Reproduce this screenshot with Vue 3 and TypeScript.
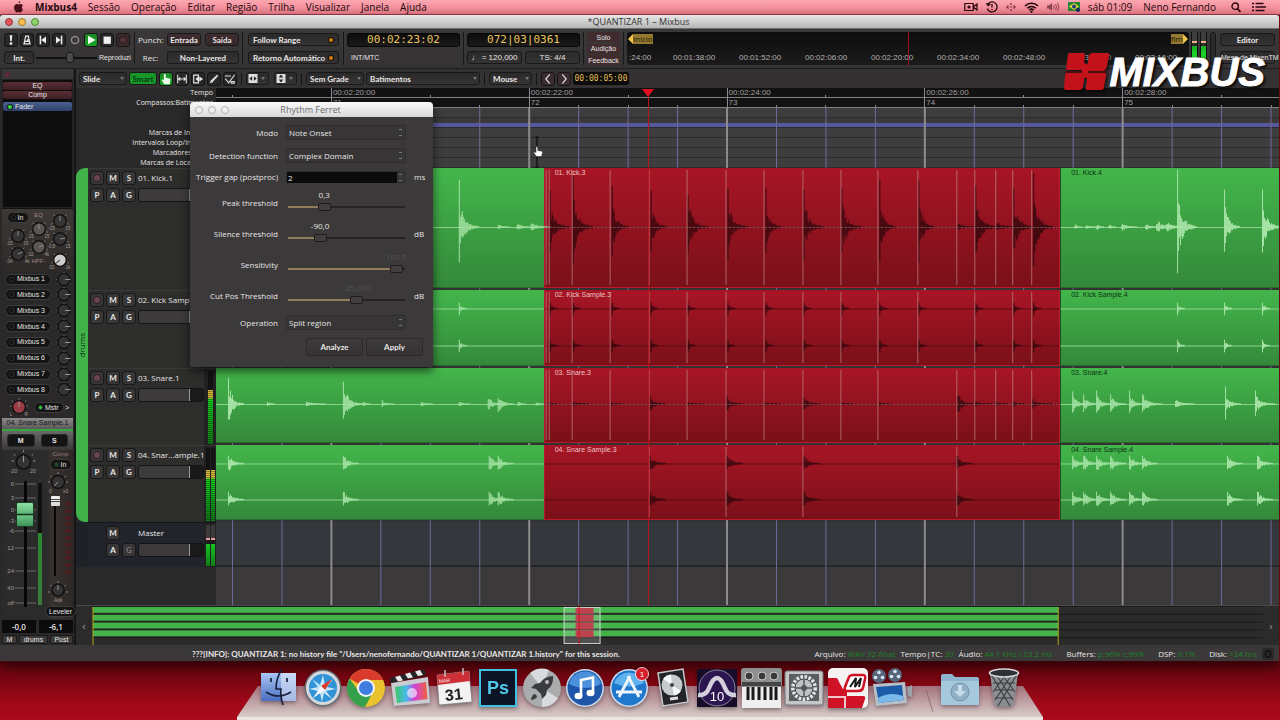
<script setup lang="ts">
import { ref } from 'vue'

type Burst = [x: number, up: number, down: number, body: number, tau: number]
interface Region { name: string; span: number; kind: 'green' | 'red' }
interface Track {
  name: string
  height: number
  stereo: boolean
  fader: number
  level: number
  centers: number[]
  regions: Region[]
  light: string
  dark: string
  splits: number[]
}

const ORIGIN = 216
const SPAN = 1064
const pct = (x: number): string => ((x - ORIGIN) / SPAN) * 100 + '%'

function makeRandom(seed: number): () => number {
  let s = seed
  return () => {
    s = (s * 16807) % 2147483647
    return s / 2147483647
  }
}

function wave(bursts: Burst[], centers: number[], seed: number): string {
  let d = ''
  centers.forEach((cy, c) => {
    const rnd = makeRandom(seed + c * 31)
    for (const [x, up, down, body, tau] of bursts) {
      const x0 = x - ORIGIN + 0.5
      d += `M${x0} ${(cy - up).toFixed(1)}V${(cy + down).toFixed(1)}`
      for (let i = 1; i < tau * 4; i++) {
        const env = body * Math.exp(-i / tau)
        const u = env * (0.45 + 0.75 * rnd()) + 0.5
        const l = env * (0.45 + 0.7 * rnd()) + 0.5
        d += `M${x0 + i} ${(cy - u).toFixed(1)}V${(cy + l).toFixed(1)}`
      }
    }
  })
  return d
}

const SPLITS = [546, 549, 572, 610, 649, 687, 726, 764, 803, 841, 878, 918, 957, 975, 996, 1013, 1032]

const kickLight: Burst[] = [
  [459, 48, 36, 26, 5], [498, 2, 2, 2, 3], [517, 2, 2, 3, 4], [531, 3, 3, 4, 5],
  [1075, 1, 1, 3, 2], [1086, 1, 1, 2, 3], [1097, 1, 2, 4, 2], [1109, 1, 1, 3, 2], [1122, 2, 2, 4, 4],
  [1146, 2, 2, 4, 3], [1157, 3, 3, 6, 6], [1167, 3, 3, 5, 5], [1178, 58, 47, 30, 5],
  [1225, 38, 25, 22, 4], [1263, 38, 26, 20, 5],
]
const kickDark: Burst[] = [
  [550, 37, 26, 20, 5], [573, 52, 38, 28, 5], [612, 42, 30, 24, 4], [651, 37, 25, 22, 4],
  [688, 33, 27, 22, 5], [728, 39, 34, 22, 5], [766, 40, 27, 22, 4], [804, 38, 34, 24, 5],
  [842, 40, 26, 22, 5], [880, 48, 35, 26, 4], [919, 47, 36, 28, 4], [958, 2, 2, 3, 5],
  [976, 42, 27, 28, 5], [997, 3, 3, 4, 6], [1014, 40, 22, 24, 5], [1034, 55, 40, 30, 5],
]
const sampleXs = [550, 573, 612, 651, 688, 728, 766, 804, 842, 880, 919, 976, 1014, 1034]
const sampleBurst = (x: number): Burst => [x, 6, 7, 5, 2]
const snareLight: Burst[] = [
  [228, 27, 16, 20, 4], [267, 2, 2, 2, 2], [306, 2, 2, 2, 5], [343, 23, 15, 17, 5], [363, 2, 2, 2, 2],
  [382, 4, 3, 2, 3], [421, 2, 2, 2, 3], [459, 2, 2, 2, 3], [488, 5, 5, 7, 4], [498, 6, 8, 8, 4], [518, 2, 2, 2, 2],
  [536, 1, 1, 2, 2], [1073, 13, 9, 9, 4], [1084, 10, 8, 8, 4], [1097, 14, 9, 9, 4], [1111, 10, 8, 8, 4],
  [1130, 14, 9, 9, 4], [1143, 10, 8, 9, 5], [1176, 3, 3, 4, 5], [1226, 18, 16, 9, 4], [1256, 14, 12, 8, 5],
]
const snareDark: Burst[] = [
  [550, 2, 2, 1, 2], [573, 2, 2, 2, 4], [611, 2, 2, 2, 3], [650, 9, 6, 8, 4], [688, 2, 2, 1, 4],
  [727, 8, 6, 7, 4], [765, 2, 2, 1, 4], [804, 7, 6, 7, 4], [842, 2, 2, 1, 3], [880, 2, 2, 1, 3],
  [958, 8, 8, 11, 4], [976, 3, 3, 2, 4], [996, 3, 3, 2, 3], [1014, 3, 3, 2, 3], [1033, 5, 5, 3, 5],
]
const snSampleBurst = (x: number): Burst => [x, 8, 6, 8, 4]

function regions(base: string): Region[] {
  return [
    { name: '', span: 328, kind: 'green' },
    { name: base + '.3', span: 517, kind: 'red' },
    { name: base + '.4', span: 219, kind: 'green' },
  ]
}

const tracks: Track[] = [
  { name: '01. Kick.1', height: 122, stereo: false, fader: 80, level: 0, centers: [60], regions: regions('01. Kick'),
    light: wave(kickLight, [60], 11), dark: wave(kickDark, [60], 5), splits: SPLITS },
  { name: '02. Kick Sample.1', height: 78, stereo: true, fader: 80, level: 0, centers: [19, 57], regions: regions('02. Kick Sample'),
    light: wave([459, 1178, 1225, 1263].map(sampleBurst), [19, 57], 3), dark: wave(sampleXs.map(sampleBurst), [19, 57], 9),
    splits: SPLITS.filter((x) => x !== 957 && x !== 996) },
  { name: '03. Snare.1', height: 77, stereo: false, fader: 80, level: 74, centers: [37], regions: regions('03. Snare'),
    light: wave(snareLight, [37], 21), dark: wave(snareDark, [37], 8), splits: SPLITS.filter((x) => x !== 918) },
  { name: '04. Snar…ample.1', height: 77, stereo: true, fader: 80, level: 70, centers: [19, 56], regions: regions('04. Snare Sample'),
    light: wave([228, 343, 489, 498, 1073, 1084, 1097, 1111, 1130, 1143, 1228, 1258].map(snSampleBurst), [19, 56], 15),
    dark: wave([650, 727, 804, 957].map(snSampleBurst), [19, 56], 4), splits: [649, 726, 803, 957] },
]

const grid = Array.from({ length: 22 }, (_, k) => ({ x: 232 + k * 49.5, bar: k % 4 === 2, half: k % 2 === 0 }))
const times = [
  { x: 331, t: '00:02:20:00', b: '71' }, { x: 529, t: '00:02:22:00', b: '72' }, { x: 727, t: '00:02:24:00', b: '73' },
  { x: 925, t: '00:02:26:00', b: '74' }, { x: 1123, t: '00:02:28:00', b: '75' },
]
const rulerNames = ['Tempo', 'Compassos:Batimentos', '', '', 'Marcas de Intervalo', 'Intervalos Loop/Inserção', 'Marcadores de CD', 'Marcas de Localização']
const menus = ['Sessão', 'Operação', 'Editar', 'Região', 'Trilha', 'Visualizar', 'Janela', 'Ajuda']
const miniTimes = [':24:00', '00:01:38:00', '00:01:52:00', '00:02:06:00', '00:02:20:00', '00:02:34:00', '00:02:48:00', '00:03:02:00', '00:03:16:00']
const sends = Array.from({ length: 8 }, (_, i) => 'Mixbus ' + (i + 1))
const scale = [
  { y: 4, t: '6' }, { y: 18, t: '3' }, { y: 30, t: '0' }, { y: 41, t: '-3' }, { y: 51, t: '-6' },
  { y: 68, t: '12' }, { y: 91, t: '24' }, { y: 108, t: '40' }, { y: 123, t: 'off' },
]
const sliders = [
  { label: 'Peak threshold', value: '0,3', v: 29, unit: '', off: false },
  { label: 'Silence threshold', value: '-90,0', v: 25, unit: 'dB', off: false },
  { label: 'Sensitivity', value: '100,0', v: 98, unit: '', off: true },
  { label: 'Cut Pos Threshold', value: '-35,000', v: 60, unit: 'dB', off: true },
]
const status = [
  ['Arquivo:', 'WAV 32-float'], ['Tempo|TC:', '30'], ['Áudio:', '44,1 kHz / 23,2 ms'],
  ['Buffers:', 'p:96% c:99%'], ['DSP:', '9,1%'], ['Disk:', '>24 hrs'],
]
const gap = ref('2')
</script>

<template>
  <div class="desktop">
    <header class="menubar">
      <svg class="apple" viewBox="0 0 12 14"><path d="M8.2 0C8.3 1.400 7.300 2.700 6 2.700 5.900 1.400 7 .2 8.200 0zM10 7.300c0-1.300.9-2 1.100-2.100C10.400 4.100 9.300 3.600 8.300 3.600c-.9 0-1.600.5-2.100.5S4.900 3.600 4.200 3.600C2.500 3.600.8 5 .8 7.600.8 10.300 2.800 13.400 4.100 13.400c.7 0 1.200-.5 2-.5s1.200.5 2 .5c1.300 0 2.500-2.100 3-3.300C10.600 9.700 10 8.700 10 7.300z" fill="#4a1018" /></svg>
      <a href="#" class="appname">Mixbus4</a>
      <a v-for="m in menus" :key="m" href="#">{{ m }}</a>
      <div class="tray">
        <svg width="14" height="10" viewBox="0 0 14 10"><path d="M.8 1.500h8.400v7H.8zM9.200 5l3.800-3v6z" fill="none" stroke="#2b0a10" stroke-width="1.200" /><circle cx="5" cy="5" r="1.600" fill="#2b0a10" /></svg>
        <svg width="12" height="12" viewBox="0 0 12 12"><path d="M2 3a5 5 0 1 1-.7 4.500M.5 2l1.500 2.500L4.500 3M6 3v3.500M6 8v1" fill="none" stroke="#2b0a10" stroke-width="1.300" /></svg>
        <svg width="10" height="10" viewBox="0 0 10 10"><path d="M5 1v2M5 7v2M4 5h2M2.500 3.500L1 5l1.500 1.500M7.500 3.500L9 5 7.500 6.500" fill="none" stroke="#7a2a38" stroke-width="1.200" /></svg>
        <svg width="15" height="11" viewBox="0 0 15 11"><path d="M1 4a9.200 9.200 0 0 1 13 0M3.200 6.200a6 6 0 0 1 8.600 0M5.300 8.200a3.200 3.200 0 0 1 4.400 0" fill="none" stroke="#1d060a" stroke-width="1.500" /><circle cx="7.500" cy="9.800" r="1.100" fill="#1d060a" /></svg>
        <svg width="13" height="10" viewBox="0 0 13 10"><path d="M0 3.500h2L5 1v8L2 6.500H0z" fill="#8c4450" /><path d="M6.500 3.200q1.200 1.800 0 3.600M8.500 2q2 3 0 6M10.500 1q3 4 0 8" fill="none" stroke="#8c4450" /></svg>
        <svg width="12" height="10" viewBox="0 0 12 10"><rect width="12" height="9" fill="#238a35" /><path d="M6 1l5 3.500L6 8 1 4.500z" fill="#e8d53a" /><circle cx="6" cy="4.500" r="2" fill="#1b3b8c" /><circle cx="10" cy="8" r="2" fill="#1b2b6c" /></svg>
        <span class="clock">sáb 01:09</span>
        <span class="user">Neno Fernando</span>
        <svg width="10" height="11" viewBox="0 0 10 11"><circle cx="4.200" cy="4.200" r="3.200" fill="none" stroke="#2b0a10" stroke-width="1.400" /><path d="M6.500 6.800L9.500 10" stroke="#2b0a10" stroke-width="1.700" /></svg>
        <svg width="14" height="10" viewBox="0 0 14 10"><path d="M0 1.500h2M3.500 1.500h8M0 5h2M3.500 5H14M0 8.500h2M3.500 8.500h9" stroke="#2b0a10" stroke-width="1.700" /></svg>
      </div>
    </header>

    <main class="window">
      <div class="titlebar">
        <span class="light r"></span><span class="light y"></span><span class="light g"></span>
        <h1>*QUANTIZAR 1 – Mixbus</h1>
      </div>

      <section class="transport">
        <div class="tcol keys">
          <div class="trow">
            <button class="tb" aria-label="Panic"><svg viewBox="0 0 14 14"><path d="M5.500 1.500h3L7.800 8.500H6.200z" fill="#eee" /><circle cx="7" cy="11.200" r="1.600" fill="#eee" /></svg></button>
            <button class="tb" aria-label="Metronome"><svg viewBox="0 0 14 14"><path d="M5.500 2.500h3l2 9h-7zM4.500 8.500h5M7 8.500L9.500 4" fill="none" stroke="#eee" stroke-width="1.400" /></svg></button>
            <button class="tb" aria-label="Go to start"><svg viewBox="0 0 14 14"><path d="M4 2v10" stroke="#eee" stroke-width="1.800" /><path d="M10.500 3v8L5 7z" fill="#eee" /></svg></button>
            <button class="tb" aria-label="Go to end"><svg viewBox="0 0 14 14"><path d="M10 2v10" stroke="#eee" stroke-width="1.800" /><path d="M3.500 3v8L9 7z" fill="#eee" /></svg></button>
            <button class="tb bare" aria-label="Loop"><svg viewBox="0 0 14 14"><circle cx="7" cy="7" r="4.200" fill="none" stroke="#8a8686" stroke-width="1.800" /></svg></button>
            <button class="tb on" aria-label="Play"><svg viewBox="0 0 14 14"><path d="M3.500 2l9 5-9 5z" fill="#f2fff2" /></svg></button>
            <button class="tb" aria-label="Stop"><svg viewBox="0 0 14 14"><rect x="3" y="3" width="8.500" height="8.500" fill="#eee" /></svg></button>
            <button class="tb rec" aria-label="Record"><svg viewBox="0 0 14 14"><circle cx="7" cy="7" r="4.200" fill="#553037" stroke="#1d1416" stroke-width="1" /></svg></button>
          </div>
          <div class="trow">
            <button class="btn int">Int.</button>
            <input class="shuttle" type="range" value="56" aria-label="Shuttle" />
            <span class="play">Reproduzi</span>
          </div>
        </div>
        <div class="tcol punch">
          <div class="trow"><span class="lab">Punch:</span><button class="btn maroon">Entrada</button><button class="btn maroon">Saída</button></div>
          <div class="trow"><span class="lab">Rec:</span><button class="btn wide">Non-Layered</button></div>
        </div>
        <div class="tcol follow">
          <button class="btn led">Follow Range<i></i></button>
          <button class="btn led">Retorno Automático<i></i></button>
        </div>
        <div class="tcol clk">
          <div class="lcd">00:02:23:02</div>
          <div class="trow sync">INT/MTC</div>
        </div>
        <div class="tcol clk">
          <div class="lcd">072|03|0361</div>
          <div class="trow pair"><button class="btn hel">♩ = 120,000</button><button class="btn hel">TS: 4/4</button></div>
        </div>
        <div class="tcol alerts"><button>Solo</button><button>Audição</button><button>Feedback</button></div>
        <div class="mini">
          <div class="minitop"><span class="start">início</span><span class="end">fim</span></div>
          <div class="minitimes"><span v-for="t in miniTimes" :key="t">{{ t }}</span></div>
          <i class="miniplay"></i>
        </div>
        <div class="outmeter"><i></i><i></i></div>
        <div class="peakbox"></div>
        <div class="views"><button class="btn">Editor</button><button class="btn hel mesa">Mesa de MixenTM</button></div>
      </section>

      <div class="body">
        <aside class="strip">
          <div class="striphead"><i></i></div>
          <div class="procs">
            <button class="proc">EQ</button><button class="proc">Comp</button><button class="proc fad"><i></i>Fader</button>
          </div>
          <div class="eq">
            <div class="eqcol c1">
              <button class="pill small"><i></i>In</button>
              <svg viewBox="0 0 24 20"><g class="knob"><path d="M2 14l2-2M22 14l-2-2M5 3l1.500 1.500M19 3l-1.500 1.500" /><circle cx="12" cy="10" r="7" /><path class="ptr" d="M12 10V4" /></g><text x="-1" y="20">-15</text><text x="18" y="20">15</text></svg>
              <svg viewBox="0 0 24 20"><g class="knob"><path d="M2 14l2-2M22 14l-2-2M5 3l1.500 1.500M19 3l-1.500 1.500" /><circle cx="12" cy="10" r="7" /><path class="ptr" d="M12 10l5-2" /></g><text x="-1" y="20">.04</text><text x="18" y="20">.4k</text></svg>
            </div>
            <div class="eqcol c2">
              <span>EQ</span>
              <svg viewBox="0 0 24 20"><g class="knob mid"><path d="M2 14l2-2M22 14l-2-2M5 3l1.500 1.500M19 3l-1.500 1.500" /><circle cx="12" cy="10" r="7" /><path class="ptr" d="M12 10V4" /></g><text x="-1" y="20">-15</text><text x="18" y="20">15</text></svg>
              <svg viewBox="0 0 24 20"><g class="knob mid"><path d="M2 14l2-2M22 14l-2-2M5 3l1.500 1.500M19 3l-1.500 1.500" /><circle cx="12" cy="10" r="7" /><path class="ptr" d="M12 10l5-2" /></g><text x="-1" y="20">.02</text><text x="18" y="20">4k</text></svg>
              <span>HPF-</span>
            </div>
            <div class="eqcol c3">
              <svg viewBox="0 0 24 20"><g class="knob"><path d="M2 14l2-2M22 14l-2-2M5 3l1.500 1.500M19 3l-1.500 1.500" /><circle cx="12" cy="10" r="7" /><path class="ptr" d="M12 10V4" /></g><text x="-1" y="20">-15</text><text x="18" y="20">15</text></svg>
              <svg viewBox="0 0 24 20"><g class="knob"><path d="M2 14l2-2M22 14l-2-2M5 3l1.500 1.500M19 3l-1.500 1.500" /><circle cx="12" cy="10" r="7" /><path class="ptr" d="M12 10l6-1" /></g><text x="-2" y="20">-0.8</text><text x="18" y="20">15</text></svg>
              <svg viewBox="0 0 24 20"><g class="knob white"><path d="M2 14l2-2M22 14l-2-2M5 3l1.500 1.500M19 3l-1.500 1.500" /><circle cx="12" cy="10" r="7" /><path class="ptr" d="M12 10l-5 4" /></g><text x="-1" y="20">.02</text><text x="18" y="20">1k</text></svg>
            </div>
          </div>
          <ul class="sends">
            <li v-for="s in sends" :key="s">
              <button class="pill"><i></i>{{ s }}</button>
              <svg viewBox="0 0 18 16"><g class="knob"><path d="M1 8h1M3 3l1 1M9 0v1M15 3l-1 1M3 13l1-1M15 13l-1-1" /><circle cx="9" cy="8" r="6.500" /><path class="ptr" d="M10 8h6" /></g></svg>
            </li>
          </ul>
          <div class="pan">
            <svg viewBox="0 0 28 24"><g class="knob red"><path d="M4 10h2M6 4l1.500 1M14 1v2M22 4l-1.500 1M24 10h-2" /><circle cx="14" cy="11" r="7" /><path class="ptr" d="M14 11V5" /></g><text x="4" y="21">L</text><text x="20" y="21">R</text></svg>
            <button class="pill small lit"><i></i>Mstr</button><span>&gt;</span>
          </div>
          <div class="chan">04. Snare Sample.1</div>
          <div class="ms"><button>M</button><button>S</button></div>
          <div class="lower">
            <div class="fadercol">
              <svg class="trim" viewBox="0 0 36 24"><g class="knob"><path d="M7 10h2M9 4l1.500 1M18 0v2M27 4l-1.500 1M29 10h-2" /><circle cx="18" cy="11" r="6.500" /><path class="ptr" d="M18 11V5" /></g><text x="5" y="21">-20</text><text x="24" y="21">20</text></svg>
              <div class="faderarea">
                <svg class="scale" viewBox="0 0 36 128"><g v-for="s in scale" :key="s.t"><path :d="`M13 ${s.y}H22M25 ${s.y}H34`" stroke="#6c6a6a" /><text x="12" :y="s.y + 2" text-anchor="end">{{ s.t }}</text></g></svg>
                <input class="vfader" type="range" value="79" aria-label="Gain" />
                <i class="gmeter"></i>
              </div>
            </div>
            <div class="compcol">
              <span>Comp</span>
              <button class="pill small dim"><i></i>In</button>
              <svg class="ck" viewBox="0 0 24 22"><g class="knob"><path d="M2 10h2M4 4l1.500 1M12 0v2M20 4l-1.500 1M22 10h-2" /><circle cx="12" cy="10" r="6.500" /><path class="ptr" d="M12 10l-4 4" /></g><text x="3" y="21">0</text><text x="17" y="21">x0</text></svg>
              <div class="comparea"><input class="cfader" type="range" value="100" aria-label="Compressor threshold" /><div class="leds"><i v-for="n in 11" :key="n"></i></div></div>
              <svg class="ck" viewBox="0 0 24 22"><g class="knob"><path d="M2 12h2M4 5l1.500 1M12 1v2M20 5l-1.500 1M22 12h-2" /><circle cx="12" cy="10" r="6" /><path class="ptr" d="M12 10V5" /></g><text x="8" y="22">Attk</text></svg>
              <button class="pill lev">Leveler</button>
            </div>
          </div>
          <div class="vals"><output>-0,0</output><output>-6,1</output></div>
          <div class="foot"><button>M</button><button>drums</button><button>Post</button></div>
        </aside>

        <section class="editor">
          <div class="tools">
            <label class="sel w48"><select aria-label="Edit mode"><option>Slide</option></select></label>
            <button class="btn smart">Smart</button>
            <button class="tb on" aria-label="Grab"><svg viewBox="0 0 14 14"><path d="M4.500 1.500q1.200-1 2.200 0V5.500l4.500.9q1.200.5 1 1.700L11.200 13H5L2 8.500q.5-1.500 2.500-.3z" fill="#eaffea" /></svg></button>
            <button class="tb" aria-label="Range"><svg viewBox="0 0 14 14"><path d="M2 2v10M12 2v10M3 7h8M5 5L3 7l2 2M9 5l2 2-2 2" fill="none" stroke="#e8e8e8" stroke-width="1.200" /></svg></button>
            <button class="tb" aria-label="Stretch"><svg viewBox="0 0 14 14"><path d="M2 2.500h5.500v9H2z" fill="none" stroke="#e8e8e8" stroke-width="1.300" /><path d="M7 4.500L4 7l3 2.500zM8.500 4L13 7 8.500 10z" fill="#e8e8e8" /></svg></button>
            <button class="tb" aria-label="Draw"><svg viewBox="0 0 14 14"><path d="M2 12l1-3 7.500-7 1.500 1.200L5 11z" fill="#ddd" /></svg></button>
            <button class="tb" aria-label="Edit contents"><svg viewBox="0 0 14 14"><path d="M1 3.500h7M1.500 6.500l4 5 7-9.500M8.500 10h3.500v2H8.500z" fill="none" stroke="#ddd" stroke-width="1.300" /></svg></button>
            <hr />
            <button class="btn zoomw" aria-label="Track width"><svg viewBox="0 0 10 10"><rect width="10" height="10" fill="#ddd" /><path d="M1 5l3-2.500v5zM9 5L6 2.500v5z" fill="#222" /></svg><i class="arr"></i></button>
            <button class="btn zoomw" aria-label="Track height"><svg viewBox="0 0 10 10"><rect width="10" height="10" fill="#ddd" /><path d="M5 .5L7.500 4h-5zM5 9.500L2.500 6h5z" fill="#222" /></svg><i class="arr"></i></button>
            <hr />
            <label class="sel w58"><select aria-label="Grid"><option>Sem Grade</option></select></label>
            <label class="sel w114"><select aria-label="Snap"><option>Batimentos</option></select></label>
            <hr />
            <label class="sel w44"><select aria-label="Edit point"><option>Mouse</option></select></label>
            <hr />
            <button class="tb nudge" aria-label="Nudge back"><svg viewBox="0 0 14 14"><path d="M9 1.500L4.500 7 9 12.500" fill="none" stroke="#ddd" stroke-width="1.400" /></svg></button>
            <button class="tb nudge" aria-label="Nudge forward"><svg viewBox="0 0 14 14"><path d="M5 1.500L9.500 7 5 12.500" fill="none" stroke="#ddd" stroke-width="1.400" /></svg></button>
            <div class="nclock">00:00:05:00</div>
          </div>

          <div class="canvas">
            <div class="rulers">
              <div class="rnames"><span v-for="(r, i) in rulerNames" :key="i">{{ r }}</span></div>
              <div class="rlanes">
                <div class="rl time">
                  <span v-for="t in times" :key="t.t" :style="{ left: pct(t.x) }">{{ t.t }}</span>
                  <template v-for="g in grid" :key="g.x"><i v-if="g.half && !g.bar" :style="{ left: pct(g.x) }"></i></template>
                </div>
                <div class="rl time">
                  <span v-for="t in times" :key="t.b" :style="{ left: pct(t.x) }">{{ t.b }}</span>
                  <template v-for="g in grid" :key="g.x"><i v-if="!g.bar" :style="{ left: pct(g.x) }"></i></template>
                </div>
                <div class="rl tempo"></div>
                <div class="rl meter"></div>
                <div v-for="n in 4" :key="n" class="rl mark"></div>
              </div>
            </div>

            <div class="group">
              <div class="tab"><span>drums</span></div>
              <div class="tracks">
                <div v-for="t in tracks" :key="t.name" class="track" :style="{ height: t.height + 'px' }">
                  <div class="thead">
                    <div class="tctl">
                      <div class="trow"><button class="kb" aria-label="Record arm"><i></i></button><button class="kb">M</button><button class="kb">S</button><span class="tname">{{ t.name }}</span></div>
                      <div class="trow"><button class="kb">P</button><button class="kb">A</button><button class="kb">G</button><input class="tfader" type="range" :value="t.fader" :aria-label="t.name + ' gain'" /></div>
                    </div>
                    <div class="tmeter" :class="{ mono: !t.stereo }"><i v-for="n in (t.stereo ? 2 : 1)" :key="n"><b :style="{ height: t.level + '%' }"></b></i></div>
                  </div>
                  <div class="lane">
                    <div v-for="(r, i) in t.regions" :key="i" class="region" :class="r.kind" :style="{ width: (r.span / SPAN) * 100 + '%' }">{{ r.name }}</div>
                    <svg class="wave" :viewBox="`0 0 1064 ${t.height}`" preserveAspectRatio="none">
                      <path v-for="c in t.centers" :key="'l' + c" :d="`M0 ${c + 0.5}H328M845 ${c + 0.5}H1064`" stroke="#8bd48f" />
                      <path v-for="c in t.centers" :key="'d' + c" :d="`M329 ${c + 0.5}H845`" stroke="#5c0b13" />
                      <path :d="t.light" stroke="#a6e3a6" />
                      <path :d="t.dark" stroke="#2e080c" stroke-opacity=".92" />
                      <path v-for="x in t.splits" :key="x" :d="`M${x - ORIGIN + 0.5} 2V${t.height - 3}`" stroke="#c08a8a" stroke-opacity=".7" />
                      <path v-if="!t.stereo" :d="`M329 ${t.centers[0] + 0.5}H845`" stroke="#a58a8a" stroke-opacity=".5" stroke-dasharray="3 1" />
                    </svg>
                  </div>
                </div>
              </div>
            </div>
            <div class="track master">
              <div class="thead">
                <div class="tctl">
                  <div class="trow"><span class="kb ghost"></span><button class="kb">M</button><span class="kb ghost"></span><span class="tname">Master</span></div>
                  <div class="trow"><span class="kb ghost"></span><button class="kb">A</button><button class="kb off" disabled>G</button><input class="tfader" type="range" value="80" aria-label="Master gain" /></div>
                </div>
                <div class="tmeter"><i><b></b></i><i><b></b></i></div>
              </div>
              <div class="lane"></div>
            </div>
            <div class="void"><div class="thead"></div><div class="lane"></div></div>

            <svg class="grid" viewBox="0 0 1064 497" preserveAspectRatio="none">
              <path v-for="g in grid" :key="g.x" :d="`M${g.x - ORIGIN + 0.5} 0V497`" :stroke="g.bar ? '#8c8a8a' : '#6c6a9c'" :stroke-width="g.bar ? 2 : 1" />
            </svg>
            <div class="over">
              <div class="playhead" :style="{ left: pct(648) }"><svg viewBox="0 0 12 9"><path d="M0 0h12L6 8z" fill="#e0101c" /></svg></div>
              <svg class="pointer" :style="{ left: pct(532) }" viewBox="0 0 12 34"><path d="M3 2h4M5 2v30M3 32h4" stroke="#0c0c0c" stroke-width="1.200" fill="none" /><path d="M4 12q1-1 1.800 0v3.500l4 .7q1 .5.7 1.500L9.500 21.500H4.500L1.500 17.500q1-1 2.500 0z" fill="#fff" stroke="#222" stroke-width=".5" /></svg>
            </div>
          </div>

          <div class="summary">
            <button aria-label="Scroll left">‹</button>
            <svg viewBox="0 0 1172 40" preserveAspectRatio="none">
              <rect width="1172" height="40" fill="#1a1a1a" />
              <g v-for="n in 5" :key="n">
                <rect x="0" :y="(n - 1) * 8 + 1" width="1172" height="7" fill="#2c2b2b" />
                <rect v-if="n < 5" x="1" :y="(n - 1) * 8 + 1" width="966" height="6" fill="#42b249" />
                <rect v-if="n < 5" x="484" :y="(n - 1) * 8 + 1" width="18" height="7" fill="#b01a2a" />
              </g>
              <path d="M1 1V40M967 1V40" stroke="#b9a91a" stroke-width="1" />
              <rect x="472.500" y="1.500" width="36" height="37" fill="#fff" fill-opacity=".18" stroke="#c8d8c8" />
              <path d="M487.500 0V40" stroke="#d0101c" />
            </svg>
            <button aria-label="Scroll right">›</button>
          </div>

          <form class="ferret" @submit.prevent>
            <div class="ftitle"><i></i><i></i><i></i><h2>Rhythm Ferret</h2></div>
            <div class="fgrid">
              <label for="modo">Modo</label><span class="fsel"><select id="modo"><option>Note Onset</option></select></span><span></span>
              <label for="det">Detection function</label><span class="fsel"><select id="det"><option>Complex Domain</option></select></span><span></span>
              <label for="gap">Trigger gap (postproc)</label><span class="fsel dark"><input id="gap" v-model="gap" type="text" /></span><span>ms</span>
              <template v-for="(s, i) in sliders" :key="s.label">
                <label :for="'s' + i">{{ s.label }}</label>
                <span class="fslide" :class="{ off: s.off }" :style="{ '--v': s.v + '%' }"><output>{{ s.value }}</output><input :id="'s' + i" type="range" :value="s.v" /></span>
                <span>{{ s.unit }}</span>
              </template>
              <label for="op">Operation</label><span class="fsel"><select id="op"><option>Split region</option></select></span><span></span>
            </div>
            <div class="fbtns"><button type="button">Analyze</button><button type="button">Apply</button></div>
          </form>
        </section>
      </div>

      <footer class="status">
        <span class="msg">???[INFO]: QUANTIZAR 1: no history file "/Users/nenofernando/QUANTIZAR 1/QUANTIZAR 1.history" for this session.</span>
        <span v-for="s in status" :key="s[0]" class="stat">{{ s[0] }} <b>{{ s[1] }}</b></span>
        <button aria-label="Log"><svg viewBox="0 0 10 10"><rect x="2.500" y="2" width="5" height="6" rx="1.500" fill="none" stroke="#111" stroke-width="1.500" /></svg></button>
      </footer>

      <div class="brand">
        <svg viewBox="0 0 48 40"><g fill="#c3121a"><path d="M6 1h14q2 0 2 2l-1 9q-1 5 1 6H5q-2 0-2-2l2-13q0-2 1-2z" /><path d="M29 1h15q3 0 2 3l-2 10q-1 5-5 5H25q-1-1-1-3l2-12q1-3 3-3z" /><path d="M4 21h16q2 0 2 2l-2 12q-1 3-3 3H3q-2 0-2-2l1-12q0-3 2-3z" /><path d="M26 21h15q3 0 2 3l-2 11q0 3-3 3H24q-2 0-1-3l1-8q-1-4 2-6z" /><path d="M19 10l7 3-1 14-6-3z" /></g><path d="M2 20h17M27 20h17" stroke="#5e0a0e" stroke-width="1.500" /></svg>
        <span>MIXBUS</span>
      </div>
    </main>

    <nav class="dock" aria-label="Dock">
      <svg class="shelf" viewBox="0 0 806 34" preserveAspectRatio="none">
        <defs><linearGradient id="sh" x1="0" y1="0" x2="0" y2="1"><stop offset="0" stop-color="#a3727c" /><stop offset=".5" stop-color="#bfa0a4" /><stop offset="1" stop-color="#d6ccc8" /></linearGradient></defs>
        <path d="M21 0H786L806 31H0z" fill="url(#sh)" /><path d="M0 31H806V34H0z" fill="#e9e6e0" /><path d="M689 4L696 26" stroke="#7c5058" stroke-opacity=".6" />
      </svg>
      <div class="apps">
        <a href="#" aria-label="Finder"><svg viewBox="0 0 40 40"><defs><linearGradient id="fi" x1="0" y1="0" x2="0" y2="1"><stop offset="0" stop-color="#a9c6f5" /><stop offset="1" stop-color="#4a6fc0" /></linearGradient></defs><rect x="2" y="5" width="35" height="28" fill="url(#fi)" /><path d="M22 5h15v28H22z" fill="#dfe8fa" fill-opacity=".6" /><path d="M23 1Q17 10 17 21h5Q21 28 24 37" fill="none" stroke="#16203a" stroke-width="1.600" /><path d="M12 10v4M28 10v4M7 24Q19 32 32 24" fill="none" stroke="#16203a" stroke-width="1.700" /></svg></a>
        <a href="#" aria-label="Safari"><svg viewBox="0 0 40 40"><circle cx="20" cy="20" r="18.500" fill="#686c72" /><circle cx="20" cy="20" r="17" fill="#d5d9dd" /><circle cx="20" cy="20" r="14" fill="#2f93d6" /><path d="M20 7l2 10 8-6-6 8 9 2-10 2 6 8-8-6-2 9-2-9-8 6 6-8-9-2 9-2-6-8 8 6z" fill="#c8e6fa" /><path d="M29 11L18 18l4 4z" fill="#e0392a" /><path d="M11 29l7-11 4 4z" fill="#f6f6f6" /></svg></a>
        <a href="#" aria-label="Chrome"><svg viewBox="0 0 40 40"><circle cx="20" cy="20" r="19" fill="#e9c22d" /><path d="M20 20L3.500 10.500A19 19 0 0 1 36.500 10.500L37 12H20z" fill="#d83b2c" /><path d="M20 20L13 24 3.500 10.500A19 19 0 0 0 19 39l8-15z" fill="#35a04b" /><circle cx="20" cy="20" r="9" fill="#f4f4f4" /><circle cx="20" cy="20" r="7" fill="#3f7de0" /></svg></a>
        <a href="#" aria-label="Final Cut Pro"><svg viewBox="0 0 40 40"><defs><linearGradient id="fc"><stop offset="0" stop-color="#38c860" /><stop offset=".35" stop-color="#49b8f0" /><stop offset=".6" stop-color="#d044d8" /><stop offset="1" stop-color="#f0603a" /></linearGradient></defs><path d="M1 15L38 9l2 26L4 38z" fill="#c9cbd0" /><path d="M5 19l31-5 1.500 17L7 35z" fill="url(#fc)" /><circle cx="22" cy="25" r="5" fill="#fff" fill-opacity=".6" /><path d="M0 10L34 1l2 6L1 15z" fill="#26262a" /><path d="M5 9l5-1.500 3 5-5 1zM15 6l5-1.500 3 5-5 1zM25 3.500L30 2l3 5-5 1z" fill="#e8e8e8" /></svg></a>
        <a href="#" aria-label="Calendar"><svg viewBox="0 0 40 40"><path d="M3 7L35 3l3 31L5 37z" fill="#f2f2f2" stroke="#777" stroke-width=".7" /><path d="M3 7L35 3l1 10L4 17z" fill="#cc2f35" /><path d="M11 2v7M29 0v7" stroke="#ccc" stroke-width="1.400" /><text x="5" y="15" font-size="5" fill="#fff" transform="rotate(-6 5 15)">MAR</text><text x="20" y="32" font-size="16" font-weight="700" text-anchor="middle" fill="#222" transform="rotate(-6 20 28)">31</text></svg></a>
        <a href="#" aria-label="Photoshop"><svg viewBox="0 0 40 40"><rect x="2" y="2" width="36" height="36" fill="#0c1426" stroke="#41bfe0" stroke-width="2" /><text x="20" y="26" font-size="18" font-weight="700" text-anchor="middle" fill="#4fc8ea">Ps</text></svg></a>
        <a href="#" aria-label="Launchpad"><svg viewBox="0 0 40 40"><circle cx="20" cy="20" r="19" fill="#a9abad" /><path d="M20 20L8 5A19 19 0 0 1 27 2zM20 20L36 30A19 19 0 0 1 20 39z" fill="#d8dadc" /><path d="M31 8q-8 0-13 7l-5 1-4 4 5 1 5 5 1 5 4-4 1-5q7-5 6-14zM13 26q-3 0-4 6 6-1 6-4z" fill="#3a3c40" /><circle cx="25" cy="14" r="2" fill="#bbb" /></svg></a>
        <a href="#" aria-label="iTunes"><svg viewBox="0 0 40 40"><circle cx="20" cy="20" r="19" fill="#c9d9ec" /><circle cx="20" cy="20" r="17.500" fill="#1d55a8" /><path d="M4 16a16.500 16.500 0 0 1 32 0Q20 24 4 16z" fill="#4a90dc" /><path d="M16 28V12l12-2.500V25" fill="none" stroke="#fff" stroke-width="2.600" /><ellipse cx="13.500" cy="28" rx="4" ry="3.200" fill="#fff" /><ellipse cx="25.500" cy="25" rx="4" ry="3.200" fill="#fff" /></svg></a>
        <a href="#" aria-label="App Store"><svg viewBox="0 0 40 40"><circle cx="20" cy="20" r="19" fill="#d0deee" /><circle cx="20" cy="20" r="17.500" fill="#2078cc" /><path d="M5 15a16 16 0 0 1 30 0Q20 22 5 15z" fill="#5fb2ee" /><path d="M21 8L10 29M19 8l11 21M7 24h26" fill="none" stroke="#eef6fc" stroke-width="2.800" /><circle cx="33" cy="6" r="6.500" fill="#d8202c" stroke="#fff" stroke-width=".8" /><text x="33" y="9" font-size="8" text-anchor="middle" fill="#fff">1</text></svg></a>
        <a href="#" aria-label="Logic Pro"><svg viewBox="0 0 40 40"><path d="M5 5L30 1l5 33L10 38z" fill="#222427" stroke="#c8cacc" stroke-width="1.500" /><circle cx="19" cy="17" r="10.500" fill="#c6c9cd" /><path d="M19 17L10 11A10.500 10.500 0 0 1 18 6.500zM19 17l9 6a10.500 10.500 0 0 1-7 4.500z" fill="#f6f7f8" /><circle cx="19" cy="17" r="2" fill="#444" /><path d="M17 31l8-1" stroke="#ddd" stroke-width="3" /></svg></a>
        <a href="#" aria-label="Pro Tools"><svg viewBox="0 0 40 40"><rect x="0" y="1" width="40" height="38" fill="#160c28" /><circle cx="20" cy="20" r="18" fill="#2c1650" stroke="#8a86a0" /><path d="M1 27q8 1 11-7 8-20 16 0 3 8 11 7" fill="none" stroke="#d4d0dc" stroke-width="4.500" /><text x="20" y="33" font-size="13" text-anchor="middle" fill="#fff">10</text></svg></a>
        <a href="#" aria-label="MIDI keyboard"><svg viewBox="0 0 40 40"><rect x="0" y="0" width="41" height="19" rx="3" fill="#8d8f90" /><g fill="#3a3a3a" stroke="#ccc"><circle cx="8" cy="8" r="4" /><circle cx="21" cy="8" r="4" /><circle cx="33" cy="8" r="4" /></g><rect x="1" y="14" width="39" height="4" fill="#444" /><rect x="1" y="19" width="39" height="21" fill="#efefef" /><path d="M7 19v13M12 19v13M18 19v13M24 19v13M30 19v13M35 19v13" stroke="#1a1a1a" stroke-width="3" /></svg></a>
        <a href="#" aria-label="System Preferences"><svg viewBox="0 0 40 40"><rect x="1" y="3" width="38" height="34" rx="2" fill="#c3c5c6" stroke="#77797a" /><rect x="5" y="6" width="30" height="27" fill="#5b5e60" /><circle cx="20" cy="20" r="11" fill="none" stroke="#e2e4e5" stroke-width="4" stroke-dasharray="2.500 1.500" /><circle cx="20" cy="20" r="9" fill="#bfc2c4" stroke="#444" /><circle cx="20" cy="20" r="3" fill="#555" /><path d="M20 11v18M11 20h18" stroke="#555" stroke-width="1.500" /></svg></a>
        <a href="#" aria-label="Mixbus"><svg viewBox="0 0 40 40"><rect x="0" y="0" width="40" height="40" rx="5" fill="#f5f2f2" /><path d="M0 10h8q2 0 3 4l4 7h4v19H0z" fill="#cf1226" /><path d="M21 9q1-2 4-2h10q3 0 2 4l-2 9q-1 3-5 3H19q-3 0-2-4z" fill="#fff" stroke="#cf1226" stroke-width="2.500" /><path d="M20 28h15q3 0 2 3l-3 9H18V30q0-2 2-2z" fill="#cf1226" /><path d="M0 29h16M17 28v12" stroke="#fff" stroke-width="1.500" /><path d="M22 19l6-9-1 9 6-9-2 9" fill="none" stroke="#1a1a1a" stroke-width="2" /></svg></a>
        <a href="#" aria-label="QuickTime"><svg viewBox="0 0 40 40"><circle cx="7" cy="8" r="7" fill="#56667c" /><circle cx="23" cy="7" r="7" fill="#56667c" /><g fill="#dfe8f2"><circle cx="7" cy="4.500" r="1.800" /><circle cx="3.500" cy="9.500" r="1.800" /><circle cx="10.500" cy="9.500" r="1.800" /><circle cx="23" cy="3.500" r="1.800" /><circle cx="19.500" cy="8.500" r="1.800" /><circle cx="26.500" cy="8.500" r="1.800" /></g><path d="M1 16l32-2 2 21-31 3z" fill="#b9bfc6" /><path d="M4 19l26-2 1.500 15L7 35z" fill="#1c5ba8" /><path d="M6 30q12-7 25-2v4L7 35z" fill="#7ab9ec" /><path d="M35 20l5-3v12l-4-1z" fill="#9aa2aa" /></svg></a>
      </div>
      <div class="apps extra">
        <a href="#" aria-label="Downloads"><svg viewBox="0 0 40 40"><path d="M1 8q0-2 2-2h9l3 3h22q2 0 2 2v24q0 2-2 2H3q-2 0-2-2z" fill="#8fb4cd" /><rect x="1" y="13" width="38" height="24" rx="1.500" fill="#a6c8dc" /><circle cx="20" cy="24" r="9" fill="#8fb0c6" stroke="#7496ac" /><path d="M18 17h4v6h4l-6 6-6-6h4z" fill="#c5dce9" /></svg></a>
        <a href="#" aria-label="Trash"><svg viewBox="0 0 40 40"><path d="M6 5L10 37q10 4 20 0L34 5z" fill="#8b8d90" /><path d="M8 8l18 30M13 8l16 24M19 8l12 16M32 8L14 38M27 8L11 32M21 8L9 24M9 15h22M10 22h20M11 30h18" stroke="#3a3c3e" stroke-width="1.100" /><ellipse cx="20" cy="5" rx="14.500" ry="4" fill="#2e3032" stroke="#d4d6d8" stroke-width="1.600" /></svg></a>
      </div>
    </nav>
  </div>
</template>

<style>
html, body { margin: 0; background: #8f0716; }
</style>

<style scoped>
* { box-sizing: border-box; }
.desktop { min-height: 100vh; display: flex; flex-direction: column; overflow: hidden; background: linear-gradient(180deg, #9a0716 0, #9a0716 660px, #5c040d 662px, #9c0817 700px, #ab0a1b 720px); font: 500 8px/10px "Open Sans", "Noto Sans", sans-serif; color: #e8e6e6; }
button, select, input { font: inherit; color: inherit; margin: 0; padding: 0; border: 0; background: none; }
a { color: inherit; text-decoration: none; }
svg { display: block; }
h1, h2, ul { margin: 0; padding: 0; font-weight: 400; }

.menubar { height: 15px; display: flex; align-items: center; gap: 11px; padding: 0 14px 0 13px; background: linear-gradient(#fba8b2, #f2808f); color: #220a0e; font-size: 10px; line-height: 14px; border-bottom: 1px solid #a53a4a; font-weight: 400; }
.apple { width: 11px; height: 12px; }
.appname { font-weight: 700; }
.tray { margin-left: auto; display: flex; align-items: center; gap: 8px; }
.user { margin: 0 7px 0 3px; }
.tray svg:last-child { margin-left: 3px; }

.window { position: relative; background: #3a3838; margin-right: 1px; box-shadow: 0 4px 12px rgba(0, 0, 0, .6); }
.titlebar { height: 14px; display: flex; align-items: center; gap: 5px; padding-left: 5px; background: linear-gradient(#e8e8e8, #b6b6b6); border-bottom: 1px solid #6e6e6e; border-radius: 3px 3px 0 0; }
.titlebar h1 { flex: 1; text-align: center; font-size: 9px; color: #333; padding-right: 46px; }
.light { width: 8px; height: 8px; border-radius: 50%; border: 1px solid #8a3a38; background: #e8555a; }
.light.y { background: #f5bd4a; border-color: #a5782c; }
.light.g { background: #8fd168; border-color: #4c8a34; }

.transport { height: 40px; display: flex; align-items: stretch; padding: 3px 4px 3px 3px; background: linear-gradient(#3a3838, #343232); border-bottom: 1px solid #1f1e1e; }
.tcol { display: flex; flex-direction: column; justify-content: space-between; border-right: 1px solid #191818; padding: 1px 3px 1px 3px; }
.trow { display: flex; align-items: center; }
.keys { width: 132px; padding-left: 1px; }
.keys .trow { gap: 2px; }
.tb { width: 14px; height: 14px; flex: none; border-radius: 3px; background: #282727; border: 1px solid #151414; }
.tb svg { width: 12px; height: 12px; }
.tb.bare { background: none; border-color: transparent; }
.tb.on { background: linear-gradient(#1c8a26, #18a526); }
.tb.rec { background: #3a2a2d; }
.btn { height: 13px; border: 1px solid #1a1919; border-radius: 3px; background: linear-gradient(#2b2a2a, #353333); text-align: center; line-height: 10px; white-space: nowrap; }
.btn, .sel select, .msg, .fbtns button, .kb { font-family: Lato, "Open Sans", sans-serif; font-weight: 700; }
.btn.int { width: 30px; flex: none; }
.btn.hel, .play, .sync, .alerts button { font-family: "Liberation Sans", Arial, sans-serif; font-size: 8px; }
.btn.hel { font-weight: 400; }
.btn.mesa { font-size: 7px; overflow: visible; }
.maroon { background: linear-gradient(#3f2c2f, #35292b); }
.shuttle { appearance: none; flex: 1; min-width: 0; height: 12px; background: linear-gradient(#111, #111) center / 100% 2px no-repeat; }
.shuttle::-webkit-slider-thumb { appearance: none; width: 8px; height: 11px; border-radius: 3px; background: #4a4848; border: 1px solid #161616; }
.keys .play { width: 32px; white-space: nowrap; font-size: 7px; }
.punch { width: 108px; }
.punch .trow { gap: 4px; }
.punch .btn { width: 35px; flex: 1; }
.punch .lab { width: 25px; text-align: center; }
.follow { width: 101px; padding: 1px 4px 1px 5px; }
.led { display: flex; align-items: center; justify-content: space-between; padding: 0 5px 0 4px; }
.led i { width: 4px; height: 4px; border-radius: 50%; background: #d07a18; box-shadow: 0 0 0 1px #1a1206; }
.clk { width: 120px; padding: 1px 3px; }
.lcd { height: 14px; border-radius: 3px; background: linear-gradient(#0c0c0c, #1c1b1b); border: 1px solid #060606; color: #ecc55c; font: 11px/12px "DejaVu Sans Mono", monospace; text-align: center; }
.sync { padding: 0 4px; height: 13px; }
.clk .sync { font-size: 7px; }
.pair { gap: 3px; }
.pair .btn { flex: 1; }
.alerts { width: 40px; padding: 0 3px; }
.alerts button { height: 10px; line-height: 9px; background: #402c2f; font-size: 7px; border-radius: 2px; }
.mini { position: relative; flex: 1; min-width: 0; margin-left: 3px; border-radius: 3px; background: linear-gradient(#0d0d0d, #1c1b1b); display: flex; flex-direction: column; justify-content: space-between; padding: 2px 1px; overflow: hidden; }
.minitop { display: flex; justify-content: space-between; }
.minitop span { height: 10px; line-height: 10px; background: #957a30; color: #1a1403; display: flex; align-items: center; }
.start::before { content: ""; border: 5px solid #0f0f0f; border-right-color: #f0c24a; border-left: 0; }
.end::after { content: ""; border: 5px solid #0f0f0f; border-left-color: #f0c24a; border-right: 0; }
.minitimes { display: flex; font: 8px/10px "Liberation Sans", Arial, sans-serif; color: #b2b0b0; padding-left: 1px; }
.minitimes span { flex: 0 0 66px; }
.minitimes span:first-child { flex-basis: 44px; }
.miniplay { position: absolute; top: 0; bottom: 0; left: 50%; width: 1px; background: #a3121c; }
.outmeter { display: flex; gap: 2px; width: 19px; padding: 0 1px 0 2px; }
.outmeter i { flex: 1; background: linear-gradient(#3c3f3c 9px, #f0b090 9px, #f0b090 11px, #2a2c2a 11px, #2a2c2a 14px, #19a823 14px, #1cd82a 22px, #128a1a); border: 1px solid #111; border-width: 0 1px; }
.peakbox { width: 6px; margin: 0 4px 0 2px; border: 1px solid #171616; border-radius: 3px; background: #2b2a2a; }
.views { width: 55px; display: flex; flex-direction: column; justify-content: space-between; padding: 1px 0; }

.body { display: flex; background: #2a2929; }
.strip { width: 76px; flex: none; background: #2a2828; border-right: 2px solid #161515; display: flex; flex-direction: column; padding: 0 1px 0 2px; font-family: "Liberation Sans", Arial, sans-serif; font-size: 7px; line-height: 8px; }
.striphead { height: 10px; background: #393737; padding: 3px; }
.striphead i { display: block; width: 5px; height: 5px; border-radius: 50%; background: #5e2b35; }
.procs { height: 129px; background: #0d0d0d; border: 1px solid #222; padding: 2px 0; display: flex; flex-direction: column; gap: 1px; }
.proc { height: 8px; line-height: 8px; background: linear-gradient(#5a2f35, #3c1f24); border-radius: 2px; }
.proc.fad { margin-top: 2px; height: 9px; text-align: left; background: linear-gradient(#4a628f, #2f4069); padding-left: 5px; display: flex; align-items: center; gap: 3px; }
.proc.fad i { width: 4px; height: 4px; border-radius: 50%; background: #3fd63f; box-shadow: 0 0 0 1px #122; }
.eq { height: 64px; display: flex; justify-content: space-between; padding: 0 3px 0 5px; background: linear-gradient(#3d3935, #2c2928); border-top: 1px solid #141313; }
.eqcol { width: 21px; display: flex; flex-direction: column; align-items: center; }
.eqcol svg { width: 22px; height: 18px; flex: none; overflow: visible; }
.eqcol span { color: #a08486; line-height: 10px; font-size: 6px; }
.c1 { padding-top: 3px; }
.c1 .pill { margin-bottom: 4px; }
.c2 { padding-top: 1px; }
.c3 { padding-top: 3px; }
.c3 svg:last-child { margin-top: 3px; }
text { font-family: "Liberation Sans", Arial, sans-serif; }
.strip text { font-size: 5px; fill: #a09c9a; }
.knob path { stroke: #8a8684; stroke-width: 1; fill: none; }
.knob circle { fill: #353333; stroke: #111; stroke-width: 1.500; }
.knob .ptr { stroke: #999; }
.knob.mid circle { fill: #5c5553; }
.knob.white circle { fill: #cfcdcb; }
.knob.white .ptr { stroke: #111; }
.knob.red circle { fill: #9a3b45; }
.pill { height: 11px; width: 46px; border-radius: 6px; background: #151414; border: 1px solid #3e3c3c; display: flex; align-items: center; gap: 3px; padding: 0 3px; font-size: 7px; color: #e6e4e4; line-height: 8px; }
.pill i { width: 5px; height: 5px; flex: none; border-radius: 50%; background: #0a0a0a; border: 1px solid #333; }
.pill.small { width: 22px; gap: 2px; }
.pill.lit { width: 30px; }
.pill.lit i { background: #2bd23a; }
.pill.dim i { background: #124a18; }
.pill.lev { width: 31px; padding: 0; justify-content: center; margin-top: 4px; }
.sends { list-style: none; height: 125px; padding: 0 0 0 3px; display: flex; flex-direction: column; justify-content: space-between; }
.sends li { height: 14px; display: flex; align-items: center; justify-content: space-between; }
.sends svg { width: 18px; height: 15px; }
.pan { height: 21px; display: flex; align-items: center; justify-content: space-between; padding: 0 4px 0 3px; }
.pan svg { width: 28px; height: 22px; overflow: visible; }
.chan { height: 13px; background: linear-gradient(#8d8b8b, #5a5858); color: #161515; text-align: center; line-height: 10px; border-bottom: 2px solid #35a83c; font-size: 7px; white-space: nowrap; }
.ms { height: 19px; display: flex; justify-content: space-around; align-items: center; background: linear-gradient(#6a6867, #3a3837); padding: 0 5px 0; gap: 6px; }
.ms button { flex: 1; height: 13px; border-radius: 3px; background: #151414; border: 1px solid #2c2a2a; font-weight: 700; }
.lower { display: flex; height: 169px; background: linear-gradient(90deg, #2c2b2b 45px, #38322f 50px, #2d2827); }
.fadercol { width: 43px; display: flex; flex-direction: column; }
.trim { width: 43px; height: 26px; margin: 0 0 4px; }
.faderarea { display: flex; height: 128px; position: relative; }
.scale { width: 36px; height: 128px; }
.strip .scale text { font-size: 6px; }
.vfader { position: absolute; left: 14px; top: 1px; width: 18px; height: 126px; appearance: none; writing-mode: vertical-lr; direction: rtl; background: linear-gradient(#070707, #070707) center / 3px 100% no-repeat; }
.vfader::-webkit-slider-thumb { appearance: none; width: 18px; height: 25px; border-radius: 2px; border: 1px solid #1c3a24; background: linear-gradient(#8fe0a5, #5fb878 45%, #15391f 47%, #15391f 53%, #6cc486 55%, #3f9358); }
.gmeter { width: 4px; height: 122px; margin-top: 3px; background: linear-gradient(#0e120e 50px, #2c8a30 50px, #3a7a3a); }
.compcol { flex: 1; display: flex; flex-direction: column; align-items: center; }
.compcol span { color: #95827f; font-size: 6px; line-height: 9px; }
.ck { width: 24px; height: 22px; margin: 2px 6px 0 0; overflow: visible; }
.comparea { display: flex; gap: 5px; height: 84px; padding: 2px 0 2px; }
.cfader { width: 9px; height: 80px; appearance: none; writing-mode: vertical-lr; direction: rtl; background: linear-gradient(#070707, #070707) center / 2px 100% no-repeat; }
.cfader::-webkit-slider-thumb { appearance: none; width: 9px; height: 10px; border-radius: 1px; background: linear-gradient(#eee 30%, #444 35%, #eee 45%, #444 55%, #ddd 65%); }
.leds { display: flex; flex-direction: column; justify-content: space-between; padding: 6px 0 2px; }
.leds i { width: 6px; height: 4px; background: #4a1c20; }
.vals { display: flex; gap: 3px; height: 13px; margin-top: 1px; }
.vals output { flex: 1; background: #0b0b0b; text-align: center; font: 600 8px/13px "Open Sans", sans-serif; }
.foot { display: flex; gap: 2px; padding: 2px 0; height: 12px; }
.foot button { flex: 1 0 auto; height: 9px; line-height: 8px; border-radius: 2px; background: #3b3939; border: 1px solid #1a1919; }

.editor { flex: 1; min-width: 0; position: relative; display: flex; flex-direction: column; }
.tools { height: 19px; display: flex; align-items: center; gap: 2px; padding: 0 3px; background: #333131; }
.tools hr { width: 1px; height: 12px; border: 0; background: #151414; margin: 0 2px; }
.sel { position: relative; height: 13px; border: 1px solid #1a1919; border-radius: 3px; background: linear-gradient(#2b2a2a, #353333); display: flex; }
.sel select { appearance: none; width: 100%; padding: 0 3px; line-height: 10px; outline: 0; }
.sel::after, .arr { content: ""; border: 2px solid transparent; border-top: 3px solid #777; border-bottom: 0; align-self: center; margin-right: 2px; }
.w48 { width: 48px; } .w58 { width: 58px; } .w114 { width: 114px; } .w44 { width: 43px; }
.smart { width: 28px; background: #17962a; color: #0a3a10; }
.zoomw { width: 23px; display: flex; align-items: center; justify-content: space-between; padding: 0 1px; }
.zoomw + .zoomw { margin-left: 3px; }
.zoomw svg { width: 10px; height: 9px; }
.nudge { background: #3c2c2f; }
.nclock { height: 13px; width: 56px; border-radius: 3px; background: #0c0c0c; color: #e6bd55; font: 8px/13px "DejaVu Sans Mono", monospace; text-align: center; }

.canvas { position: relative; height: 517px; }
.rulers { display: flex; height: 80px; }
.rnames { width: 140px; flex: none; padding-right: 3px; display: flex; flex-direction: column; align-items: flex-end; font-size: 7px; }
.rnames span { height: 10px; line-height: 10px; white-space: nowrap; }
.rlanes { flex: 1; position: relative; }
.rl { height: 10px; position: relative; background: #3e3d3d; border-bottom: 1px solid #2c2b2b; }
.rl.time { background: #131212; border-bottom: 1px solid #807e7e; }
.rl.time span { position: absolute; top: 0; height: 10px; padding-left: 1px; border-left: 1px solid #8c8a8a; font: 8px/10px "Liberation Sans", Arial, sans-serif; color: #a2a0a0; }
.rl.time i { position: absolute; bottom: 0; width: 1px; height: 2px; background: #8c8a8a; }
.rl.meter { background: linear-gradient(#3a3939 5px, #56569c 5px); }
.group { display: flex; }
.tab { width: 12px; flex: none; background: #41b24a; border-radius: 9px 0 0 9px; display: flex; align-items: center; justify-content: center; color: #0c2a10; }
.tab span { writing-mode: vertical-rl; transform: rotate(180deg); }
.tracks { flex: 1; min-width: 0; }
.track { display: flex; }
.thead { width: 128px; flex: none; background: #2d2d2b; border-top: 1px solid #3a3938; display: flex; justify-content: space-between; }
.tctl { padding: 2px 0 0 2px; display: flex; flex-direction: column; gap: 3px; flex: 1; min-width: 0; }
.tctl .trow { gap: 2px; }
.kb { width: 14px; height: 14px; flex: none; border-radius: 3px; border: 1px solid #191818; background: #383636; text-align: center; line-height: 11px; }
.kb i { display: block; width: 8px; height: 8px; margin: 0 auto; border-radius: 50%; background: #6a4850; border: 1px solid #2a1c20; }
.kb.ghost { visibility: hidden; }
.kb.off { color: #777; }
.tname { white-space: nowrap; }
.tfader { appearance: none; flex: 1; min-width: 0; height: 14px; border: 1px solid #141414; border-radius: 3px; background: linear-gradient(90deg, #3c3a3a 80%, #1b1a1a 80%); }
.tfader::-webkit-slider-thumb { appearance: none; width: 1px; height: 12px; background: #9a9898; }
.tmeter { width: 12px; padding: 2px 1px 1px 2px; display: flex; gap: 1px; background: #222121; }
.tmeter i { flex: 1; background: #141313; display: flex; align-items: flex-end; }
.tmeter b { width: 100%; background: repeating-linear-gradient(transparent 0 1px, rgba(0, 0, 0, .35) 1px 2px), linear-gradient(#d8b83a 8px, #16d321 9px, #0f7c16); }
.tmeter.mono { padding: 2px 3px 1px 4px; }
.lane { flex: 1; min-width: 0; position: relative; display: flex; border-bottom: 2px solid #333131; }
.region { position: relative; z-index: 2; flex: none; padding: 1px 0 0 10px; font: 7px/8px "Liberation Sans", Arial, sans-serif; color: #0e3212; overflow: hidden; white-space: nowrap; border-bottom: 1px solid #276a2c; }
.region.green { background: linear-gradient(#43b64b, #34893a); }
.region.red { background: linear-gradient(#a81525, #7a1019); color: #ecc4c6; border: 1px solid #bb1828; border-width: 0 1px 1px 1px; }
.region + .region.green { border-left: 1px solid #1d5022; }
.wave { position: absolute; z-index: 3; inset: 0; width: 100%; height: 100%; overflow: hidden; }
.wave path { fill: none; stroke-width: 1; }
.master { height: 45px; padding-left: 12px; background: #1e2126; }
.master .thead { background: #21242b; border-top-color: #15171a; }
.master .tmeter b { height: 100%; background: linear-gradient(#3c3a3a 13px, #e89a9c 13px, #e89a9c 15px, #1c1b1b 15px, #1c1b1b 19px, #18c424 19px, #0f7c16); }
.master .lane { background: #34373b; border-bottom-color: #242527; }
.master .tctl { padding-top: 3px; }
.void { height: 38px; display: flex; padding-left: 12px; }
.void .thead { background: none; border: 0; }
.void .lane { background: #3b3939; border: 0; }
.grid { position: absolute; z-index: 1; left: 140px; top: 20px; width: calc(100% - 140px); height: calc(100% - 20px); }
.over { position: absolute; z-index: 4; left: 140px; top: 0; right: 0; bottom: 0; pointer-events: none; }
.playhead { position: absolute; top: 1px; bottom: 0; width: 1px; background: #b3141f; }
.playhead svg { width: 12px; height: 9px; margin-left: -6px; }
.pointer { position: absolute; top: 47px; width: 12px; height: 34px; }

.summary { display: flex; height: 40px; background: #2c2b2b; border-top: 1px solid #4a4848; }
.summary svg { flex: 1; min-width: 0; height: 39px; }
.summary button { width: 16px; flex: none; color: #999; font-size: 11px; }

.ferret { position: absolute; z-index: 6; left: 114px; top: 33px; width: 243px; background: #3b393a; border-radius: 4px 4px 2px 2px; box-shadow: 0 4px 10px rgba(0, 0, 0, .6); padding-bottom: 11px; }
.ftitle { height: 15px; display: flex; align-items: center; gap: 5px; padding-left: 5px; background: linear-gradient(#fafafa, #d9d9d9); border-radius: 4px 4px 0 0; }
.ftitle i { width: 8px; height: 8px; border-radius: 50%; border: 1px solid #b2b2b2; background: #efefef; }
.ftitle h2 { flex: 1; text-align: center; font-size: 9px; color: #6b6b6b; padding-right: 46px; }
.fgrid { display: grid; grid-template-columns: 88px 120px 1fr; column-gap: 8px; grid-template-rows: 23px 23px 20px 31px 31px 31px 31px 23px; align-items: center; padding-top: 4px; }
.fgrid label { text-align: right; white-space: nowrap; }
.fsel { position: relative; height: 15px; border: 1px solid #2f2d2e; border-radius: 2px; background: #373536; display: flex; align-items: center; }
.fsel select { appearance: none; width: 100%; padding: 0 2px; outline: 0; }
.fsel::after { content: ""; width: 3px; height: 5px; flex: none; margin-right: 3px; border: 1px solid #777; border-width: 1px 0; }
.fsel.dark { height: 12px; }
.fsel.dark input { width: 100%; height: 11px; min-width: 0; background: #0b0b0b; padding: 0 1px; margin-right: 2px; }
.fslide { display: flex; flex-direction: column; align-items: stretch; height: 26px; padding: 0 1px 0 2px; }
.fslide output { width: 48px; margin-left: calc(var(--v) * .89 - 18px); text-align: center; line-height: 10px; }
.fslide input { appearance: none; width: 100%; height: 14px; background: linear-gradient(90deg, #8f7d5c var(--v), #242223 var(--v)) center / 100% 2px no-repeat; }
.fslide input::-webkit-slider-thumb { appearance: none; width: 13px; height: 8px; border-radius: 2px; background: #403e3f; border: 1px solid #1d1b1c; }
.off output { color: #555253; }
.fbtns { display: flex; gap: 3px; justify-content: flex-end; padding: 4px 10px 0 0; }
.fbtns button { width: 57px; height: 18px; border: 1px solid #2b292a; border-radius: 2px; background: linear-gradient(#3c3a3b, #343233); }

.status { height: 16px; display: flex; align-items: center; gap: 5px; padding: 2px 5px 0 192px; background: #3a3838; white-space: nowrap; }
.msg { flex: 1; }
.stat b { font-weight: 400; color: #1d8426; }
.stat:nth-child(n+5) { margin-left: 9px; }
.status button { width: 12px; height: 12px; border-radius: 3px; background: #2a2929; }
.status button svg { width: 10px; height: 10px; margin: auto; }

.brand { position: absolute; z-index: 8; right: 14px; top: 37px; display: flex; align-items: center; pointer-events: none; }
.brand svg { width: 48px; height: 40px; filter: drop-shadow(1px 2px 1px rgba(0, 0, 0, .6)); }
.brand span { font: italic 700 40px/40px "Liberation Sans", Arial, sans-serif; color: #fff; -webkit-text-stroke: 1px #fff; text-shadow: 2px 2px 3px #000; margin-left: -2px; }

.dock { position: relative; margin: auto auto 0; width: 806px; height: 54px; display: flex; padding: 1px 17px 0 20px; }
.shelf { position: absolute; left: 0; bottom: 0; width: 100%; height: 34px; }
.apps { position: relative; display: flex; flex: 0 0 657px; height: 42px; }
.apps.extra { flex: 0 0 88px; margin-left: 24px; }
.apps a { flex: 1; display: flex; align-items: center; justify-content: center; filter: drop-shadow(0 2px 2px rgba(0, 0, 0, .35)); }
.apps a svg { width: 40px; height: 40px; overflow: visible; }
</style>
